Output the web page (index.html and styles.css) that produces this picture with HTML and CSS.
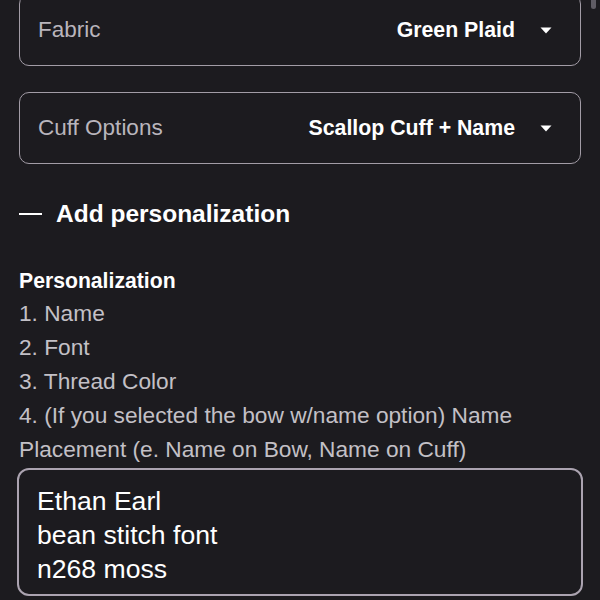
FILE: index.html
```html
<!DOCTYPE html>
<html lang="en">
<head>
    <meta charset="UTF-8">
    <meta name="viewport" content="width=device-width, initial-scale=1.0">
    <title>Product Options</title>
    <link rel="stylesheet" href="styles.css">
</head>
<body>

<div class="scroll-thumb"></div>

<div class="options">
    <label class="select-field first">
        <span class="select-label">Fabric</span>
        <span class="select-value">Green Plaid</span>
        <svg class="caret" width="12" height="7" viewBox="0 0 12 7"><path d="M0.5 0.5 H11.5 L6 6.5 Z" fill="#fff"/></svg>
    </label>

    <label class="select-field">
        <span class="select-label">Cuff Options</span>
        <span class="select-value">Scallop Cuff + Name</span>
        <svg class="caret" width="12" height="7" viewBox="0 0 12 7"><path d="M0.5 0.5 H11.5 L6 6.5 Z" fill="#fff"/></svg>
    </label>

    <div class="toggle">
        <span class="toggle-dash"></span>
        <span class="toggle-text">Add personalization</span>
    </div>

    <div class="personalize">
        <div class="personalize-title">Personalization</div>
        <div class="personalize-help">
            1. Name<br>
            2. Font<br>
            3. Thread Color<br>
            4. (If you selected the bow w/name option) Name Placement (e. Name on Bow, Name on Cuff)
        </div>
        <div class="personalize-input">Ethan Earl<br>bean stitch font<br>n268 moss</div>
    </div>
</div>

</body>
</html>
```

FILE: styles.css
```css
/* Base Styles */
body {
    font-family: 'Liberation Sans', Arial, sans-serif;
    background: #1c1b1f;
    color: #fff;
    margin: 0;
    overflow: hidden;
}
.scroll-thumb {
    position: absolute;
    top: 0;
    right: 4px;
    width: 5px;
    height: 9px;
    border-radius: 0 0 3px 3px;
    background: #5f5c64;
}
.options {
    padding: 0 19px;
}

/* Dropdown rows */
.select-field {
    display: flex;
    align-items: center;
    height: 70px;
    padding: 0 28px 0 18px;
    border: 1.5px solid #a29ca6;
    border-radius: 10px;
    margin-bottom: 26px;
}
.select-field.first {
    margin-top: -6px;
}
.select-label {
    flex: 1;
    font-size: 22.5px;
    color: #b9b5bc;
}
.select-value {
    font-size: 21.3px;
    font-weight: bold;
    margin-right: 25px;
}
.caret {
    display: block;
}

/* Collapsible header */
.toggle {
    display: flex;
    align-items: center;
    height: 48px;
}
.toggle-dash {
    width: 23px;
    height: 2px;
    background: #fff;
    margin-right: 14px;
}
.toggle-text {
    font-size: 24.5px;
    font-weight: bold;
}

/* Personalization block */
.personalize {
    margin-top: 28px;
}
.personalize-title {
    font-size: 21.2px;
    font-weight: bold;
    line-height: 30px;
}
.personalize-help {
    font-size: 22.7px;
    line-height: 34px;
    color: #c3c0c6;
}
.personalize-input {
    margin: 2px -2px 0;
    padding: 14px 18px 8px;
    border: 2px solid #aba3b0;
    border-radius: 12px;
    font-size: 26.6px;
    line-height: 34px;
}
```
